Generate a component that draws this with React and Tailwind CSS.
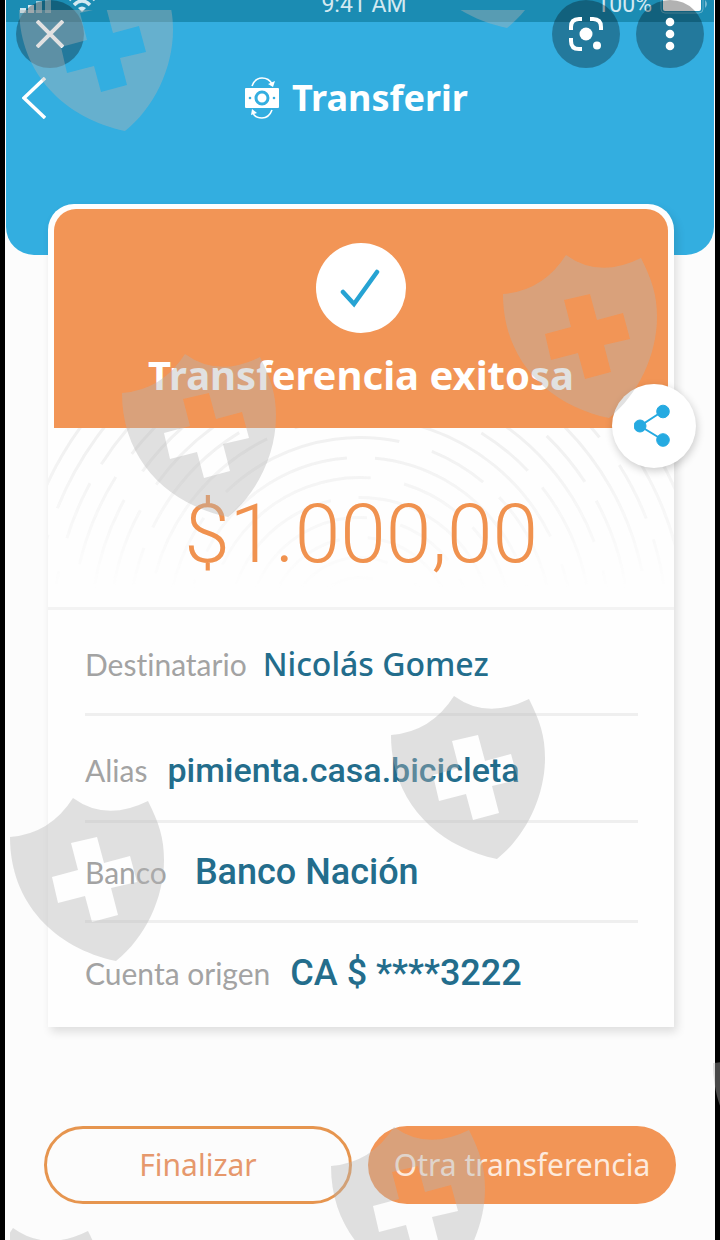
const SHIELD =
  'M0 39 Q40 36 63 0 Q96 24 138 3 C149 25 154 40 154 62 C154 100 135 140 106 163 C45 150 0 105 0 39 Z ' +
  'M61 45 L87 39 L94 65 L120 58 L127 84 L101 90 L108 117 L82 124 L75 98 L48 105 L42 79 L68 72 Z';

// offsets are relative to the watermark layer, which starts 10px in from the corner
const shields = [
  [9, -42],
  [391, -145],
  [493, 245],
  [112, 344],
  [381, 686],
  [0, 788],
  [703, 1014],
  [321, 1117],
  [-60, 1218],
];

const detalles = [
  { label: 'Destinatario', value: 'Nicolás Gomez', row: 'h-[106px] gap-4 pt-1', font: "font-['Noto_Sans'] text-[32px]" },
  { label: 'Alias', value: 'pimienta.casa.bicicleta', row: 'h-[107px] gap-5 pt-1', font: 'font-[Roboto] text-[34px]' },
  { label: 'Banco', value: 'Banco Nación', row: 'h-[100px] gap-7', font: 'font-[Roboto] text-[36px]' },
  { label: 'Cuenta origen', value: 'CA $ ****3222', row: 'h-[104px] gap-5 pb-1', font: 'font-[Roboto] text-[36px]' },
];

function Watermark() {
  return (
    <div className="pointer-events-none absolute top-[10px] right-0 bottom-0 left-[10px] z-30 overflow-hidden">
      <svg className="h-full w-full" fill="#b4b4b4" fillOpacity="0.4" fillRule="evenodd" aria-hidden="true">
        {shields.map(([x, y]) => (
          <path key={`${x}-${y}`} d={SHIELD} transform={`translate(${x} ${y})`} />
        ))}
      </svg>
    </div>
  );
}

function ViewerBar() {
  const round = 'flex size-[68px] items-center justify-center rounded-full bg-black/30 text-white';
  return (
    <div className="absolute inset-x-0 top-0 z-20 flex gap-4 px-4">
      <button type="button" aria-label="Cerrar" className={`${round} mr-auto`}>
        <svg width="28" height="28" viewBox="0 0 28 28" stroke="currentColor" strokeWidth="4">
          <path d="M1 1 L27 27 M27 1 L1 27" />
        </svg>
      </button>
      <button type="button" aria-label="Buscar con la cámara" className={round}>
        <svg width="34" height="34" viewBox="0 0 34 34" fill="none" stroke="currentColor" strokeWidth="4">
          <path d="M2 13 V10 Q2 2 10 2 H13 M21 2 H24 Q32 2 32 10 V13 M2 21 V24 Q2 32 10 32 H13" />
          <circle cx="17" cy="17" r="6.5" fill="currentColor" stroke="none" />
          <circle cx="28" cy="28.500" r="4" fill="currentColor" stroke="none" />
        </svg>
      </button>
      <button type="button" aria-label="Más opciones" className={round}>
        <svg width="10" height="34" viewBox="0 0 10 34" fill="currentColor">
          <circle cx="5" cy="5" r="4.300" />
          <circle cx="5" cy="17" r="4.300" />
          <circle cx="5" cy="29" r="4.300" />
        </svg>
      </button>
    </div>
  );
}

function StatusBar() {
  return (
    <div className="grid h-[22px] grid-cols-3 grid-rows-1 items-end bg-[#1b8cb3] pr-1 pb-[5px] pl-3 font-[Roboto] text-[23px] leading-[24px] text-[#d3e9f1]">
      <div className="flex items-end gap-4 pb-1">
        <svg width="34" height="16" viewBox="0 0 34 16" fill="currentColor">
          <rect x="2" y="11" width="6" height="5" />
          <rect x="10" y="8" width="6" height="8" />
          <rect x="18" y="4" width="6" height="12" opacity=".7" />
          <rect x="27" y="1" width="6" height="15" opacity=".6" />
        </svg>
        <svg width="28" height="20" viewBox="0 0 28 20" fill="none" stroke="currentColor" strokeWidth="3.500">
          <path d="M1 7 Q14 -5 27 7 M6 12 Q14 4 22 12" />
          <path d="M10 15 Q14 12 18 15 L14 19 Z" fill="currentColor" stroke="none" />
        </svg>
      </div>
      <span className="text-center">9:41 AM</span>
      <div className="flex items-end justify-end gap-2">
        <span>100%</span>
        <svg width="50" height="24" viewBox="0 0 50 24" fill="none">
          <rect x="1" y="-6" width="42" height="26" rx="4" stroke="currentColor" strokeOpacity=".4" />
          <rect x="3" y="-4" width="38" height="22" rx="2" fill="#fff" />
          <path d="M45 7 Q49 11 45 15 Z" fill="currentColor" opacity=".5" />
        </svg>
      </div>
    </div>
  );
}

function MoneyIcon() {
  return (
    <svg width="36" height="44" viewBox="0 0 36 44" fill="none" stroke="#fff">
      <rect x="1" y="12" width="34" height="20" rx="1" fill="#fff" stroke="none" />
      <circle cx="18" cy="22" r="6" stroke="#33aee0" strokeWidth="3" />
      <circle cx="6" cy="22" r="1.300" fill="#33aee0" stroke="none" />
      <circle cx="30" cy="22" r="1.300" fill="#33aee0" stroke="none" />
      <path d="M8 10 Q11 2 18 2 Q25 2 28 8 M28 34 Q25 42 18 42 Q11 42 9 37" strokeWidth="1.600" />
      <path d="M31 5 L29 11 L24 8 Z M7 39 L8 33 L13 37 Z" fill="#fff" stroke="none" />
    </svg>
  );
}

function Fingerprint() {
  const radii = [52, 72, 92, 112, 132, 152, 172, 192, 212, 231, 250, 269, 288, 307, 326, 345];
  return (
    <svg
      className="absolute inset-0 h-full w-full mask-b-from-10% mask-b-to-90%"
      viewBox="0 0 626 180"
      preserveAspectRatio="xMidYMid slice"
      fill="none"
      stroke="#f1f1f1"
      strokeWidth="3"
      aria-hidden="true"
    >
      {radii.map((r, i) => (
        <circle
          key={r}
          cx="312"
          cy="202"
          r={r}
          strokeDasharray={i % 2 ? '130 34 60 22' : '95 28 180 30'}
          transform={`rotate(${180 + i * 9} 312 202)`}
        />
      ))}
    </svg>
  );
}

export default function App() {
  return (
    <div className="relative min-h-screen overflow-hidden bg-black px-[5px] font-['Noto_Sans',sans-serif]">
      <div className="min-h-screen bg-[#fcfcfc]">
        <header className="mx-px h-[255px] overflow-hidden rounded-b-[28px] bg-[#33aee0]">
          <StatusBar />
          <div className="mt-[54px] grid h-[44px] grid-cols-[32px_1fr_40px] items-center px-4">
            <button type="button" aria-label="Volver">
              <svg width="24" height="42" viewBox="0 0 24 42" fill="none" stroke="#fff" strokeWidth="3.500">
                <path d="M23 1 L2 21 L23 41" />
              </svg>
            </button>
            <h1 className="flex items-center justify-center gap-3 text-[36px] leading-[44px] font-bold text-white">
              <MoneyIcon />
              Transferir
            </h1>
          </div>
        </header>

        <main>
          <section className="relative mr-[41px] -mt-[51px] ml-[43px] rounded-t-[26px] bg-[#fefefe] shadow-[3px_5px_10px_rgba(0,0,0,0.12)]">
            <div className="px-[6px] pt-[5px]">
              <div className="relative flex h-[219px] flex-col items-center rounded-t-[22px] bg-[#f29556] pt-[34px]">
                <div className="flex size-[90px] items-center justify-center rounded-full bg-white">
                  <svg width="42" height="42" viewBox="0 0 42 42" fill="none" stroke="#26a3d3" strokeWidth="4.500" strokeLinecap="round">
                    <path d="M3 25 L14 37 L37 5" />
                  </svg>
                </div>
                <h2 className="mt-[18px] text-[40px] leading-[48px] font-bold text-white">Transferencia exitosa</h2>
                <button
                  type="button"
                  aria-label="Compartir"
                  className="absolute -right-[28px] -bottom-[40px] z-10 flex size-[84px] items-center justify-center rounded-full bg-white shadow-[1px_3px_8px_rgba(0,0,0,0.2)]"
                >
                  <svg width="40" height="44" viewBox="0 0 40 44" fill="#25aae1" stroke="#25aae1">
                    <path d="M29 7 L6 22 L29 36" fill="none" strokeWidth="2" />
                    <circle cx="6" cy="22" r="6" />
                    <circle cx="29" cy="7.500" r="6.300" />
                    <circle cx="29" cy="36" r="6.300" />
                  </svg>
                </button>
              </div>
            </div>

            <div className="relative flex h-[182px] items-center justify-center border-b-[3px] border-[#f3f3f3]">
              <Fingerprint />
              <p className="relative mt-8 font-[Roboto] text-[82px] leading-[96px] font-light text-[#f0924f]">$1.000,00</p>
            </div>

            <dl className="mr-[36px] ml-[37px] divide-y-[3px] divide-[#efefef]">
              {detalles.map(({ label, value, row, font }) => (
                <div key={label} className={`flex items-center ${row}`}>
                  <dt className="font-[Lato] text-[30px] leading-[40px] text-[#a3a3a3] [font-variant-ligatures:none]">{label}</dt>
                  <dd className={`leading-[40px] font-medium text-[#236d8c] ${font}`}>{value}</dd>
                </div>
              ))}
            </dl>
          </section>

          <div className="mt-[99px] grid grid-cols-2 gap-4 px-[39px] text-[30px] leading-[36px]">
            <button type="button" className="h-[78px] rounded-full border-[3px] border-[#e6954f] text-[#e6986c]">
              Finalizar
            </button>
            <button type="button" className="h-[78px] rounded-full bg-[#f29556] text-[#fdeadd]">
              Otra transferencia
            </button>
          </div>
        </main>
      </div>

      <ViewerBar />
      <Watermark />
    </div>
  );
}
